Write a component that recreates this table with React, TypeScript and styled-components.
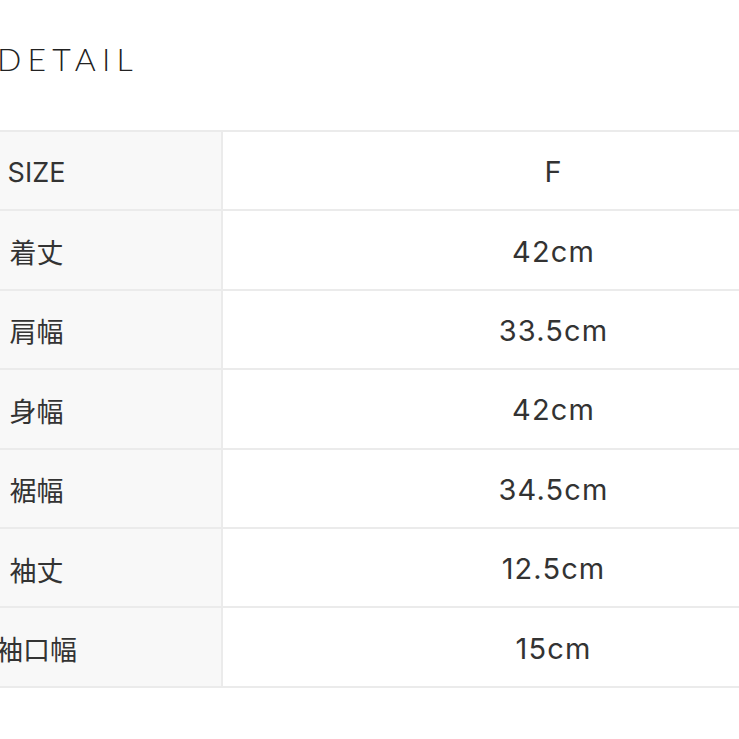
import React from "react";
import styled, { createGlobalStyle } from "styled-components";

const Global = createGlobalStyle`
  html, body { margin: 0; padding: 0; background: #fff; overflow: hidden; }
  body { width: 739px; height: 739px; }
`;

const Page = styled.div`
  width: 1100px;
  margin-left: -146px;
  font-family: Inter, "Noto Sans CJK JP", sans-serif;
  color: #333;
`;

const Heading = styled.h2`
  margin: 0;
  padding: 41px 0 0 143px;
  height: 90px;
  box-sizing: border-box;
  font-family: Lato, "Noto Sans", sans-serif;
  font-weight: 300;
  font-size: 32px;
  line-height: 36px;
  letter-spacing: 6.2px;
  color: #222;
`;

const Table = styled.div`
  margin-top: 40px;
  width: 1030px;
  display: grid;
  grid-template-columns: 369px 1fr;
  border-top: 2px solid #ebebeb;
`;

const Label = styled.div`
  height: 79.4px;
  display: flex;
  align-items: center;
  justify-content: center;
  background: #f8f8f8;
  border-right: 2px solid #ebebeb;
  border-bottom: 2px solid #ebebeb;
  font-family: Inter, "Noto Sans CJK JP", sans-serif;
  font-size: 27px;
  color: #333;
  padding: 3px 2px 0 0;
  box-sizing: border-box;
`;

const Value = styled.div`
  height: 79.4px;
  display: flex;
  align-items: center;
  justify-content: center;
  border-bottom: 2px solid #ebebeb;
  font-family: Inter, "Noto Sans CJK JP", sans-serif;
  font-size: 29px;
  letter-spacing: 1.1px;
  color: #333;
  padding-top: 2px;
  box-sizing: border-box;
`;

const rows: [string, string][] = [
  ["SIZE", "F"],
  ["着丈", "42cm"],
  ["肩幅", "33.5cm"],
  ["身幅", "42cm"],
  ["裾幅", "34.5cm"],
  ["袖丈", "12.5cm"],
  ["袖口幅", "15cm"],
];

export default function App() {
  return (
    <>
      <Global />
      <Page>
        <Heading>DETAIL</Heading>
        <Table>
          {rows.map(([k, v]) => (
            <React.Fragment key={k}>
              <Label>{k}</Label>
              <Value>{v}</Value>
            </React.Fragment>
          ))}
        </Table>
      </Page>
    </>
  );
}
